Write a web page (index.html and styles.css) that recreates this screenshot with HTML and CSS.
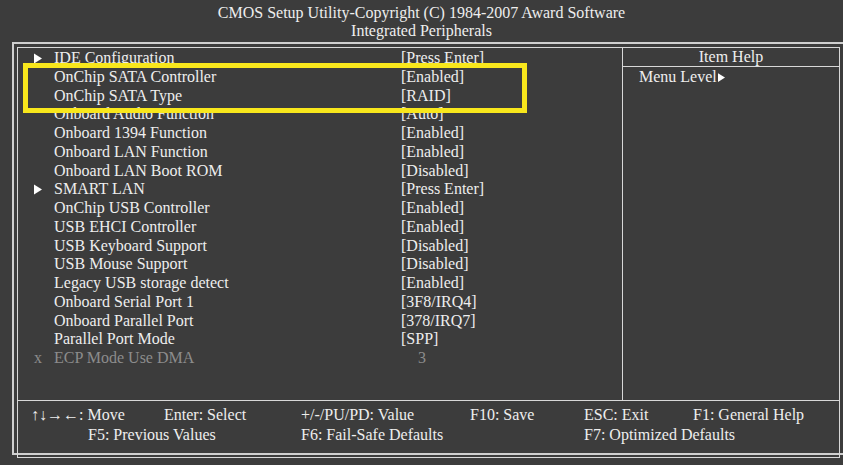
FILE: index.html
```html
<!DOCTYPE html>
<html lang="en">
<head>
    <meta charset="UTF-8">
    <meta name="viewport" content="width=device-width, initial-scale=1.0">
    <title>Integrated Peripherals</title>
    <link rel="stylesheet" href="styles.css">
</head>
<body>
    <div class="title">
        <div>CMOS Setup Utility-Copyright (C) 1984-2007 Award Software</div>
        <div>Integrated Peripherals</div>
    </div>

    <div class="frame">
        <div class="inner">
            <div class="menu">
                <div class="row"><span class="mark"><svg class="tri" viewBox="0 0 8 10"><polygon points="0,0 8,5 0,10"/></svg></span><span class="name">IDE Configuration</span><span class="value">[Press Enter]</span></div>
                <div class="row"><span class="mark"></span><span class="name">OnChip SATA Controller</span><span class="value">[Enabled]</span></div>
                <div class="row"><span class="mark"></span><span class="name">OnChip SATA Type</span><span class="value">[RAID]</span></div>
                <div class="row"><span class="mark"></span><span class="name">Onboard Audio Function</span><span class="value">[Auto]</span></div>
                <div class="row"><span class="mark"></span><span class="name">Onboard 1394 Function</span><span class="value">[Enabled]</span></div>
                <div class="row"><span class="mark"></span><span class="name">Onboard LAN Function</span><span class="value">[Enabled]</span></div>
                <div class="row"><span class="mark"></span><span class="name">Onboard LAN Boot ROM</span><span class="value">[Disabled]</span></div>
                <div class="row"><span class="mark"><svg class="tri" viewBox="0 0 8 10"><polygon points="0,0 8,5 0,10"/></svg></span><span class="name">SMART LAN</span><span class="value">[Press Enter]</span></div>
                <div class="row"><span class="mark"></span><span class="name">OnChip USB Controller</span><span class="value">[Enabled]</span></div>
                <div class="row"><span class="mark"></span><span class="name">USB EHCI Controller</span><span class="value">[Enabled]</span></div>
                <div class="row"><span class="mark"></span><span class="name">USB Keyboard Support</span><span class="value">[Disabled]</span></div>
                <div class="row"><span class="mark"></span><span class="name">USB Mouse Support</span><span class="value">[Disabled]</span></div>
                <div class="row"><span class="mark"></span><span class="name">Legacy USB storage detect</span><span class="value">[Enabled]</span></div>
                <div class="row"><span class="mark"></span><span class="name">Onboard Serial Port 1</span><span class="value">[3F8/IRQ4]</span></div>
                <div class="row"><span class="mark"></span><span class="name">Onboard Parallel Port</span><span class="value">[378/IRQ7]</span></div>
                <div class="row"><span class="mark"></span><span class="name">Parallel Port Mode</span><span class="value">[SPP]</span></div>
                <div class="row dim"><span class="mark">x</span><span class="name">ECP Mode Use DMA</span><span class="value plain">3</span></div>

                <div class="highlight"></div>
            </div>

            <div class="help">
                <div class="help-head">Item Help</div>
                <div class="help-text">Menu Level<svg class="tri small" viewBox="0 0 8 10"><polygon points="0,0 8,5 0,10"/></svg></div>
            </div>

            <div class="keys">
                <span>&uarr;&darr;&rarr;&larr;: Move</span>
                <span>Enter: Select</span>
                <span>+/-/PU/PD: Value</span>
                <span>F10: Save</span>
                <span>ESC: Exit</span>
                <span>F1: General Help</span>

                <span class="prev">F5: Previous Values</span>
                <span>F6: Fail-Safe Defaults</span>
                <span class="opt">F7: Optimized Defaults</span>
            </div>
        </div>
    </div>
</body>
</html>
```

FILE: styles.css
```css
body {
    margin: 0;
    background-color: #3c3c3c;
    color: #eeeeee;
    font-family: "Liberation Serif", "Times New Roman", serif;
    font-size: 16px;
    width: 843px;
    height: 465px;
    overflow: hidden;
}

.title {
    text-align: center;
    line-height: 18px;
    padding-top: 4px;
    height: 38px;
}

/* double line frame */
.frame {
    margin-left: 12px;
    width: 833px;
    height: 413px;
    border: 2px solid #cfcfcf;
    border-right: none;
    padding: 3px 0 3px 3px;
    box-sizing: border-box;
}

.inner {
    width: 823px;
    height: 411px;
    border: 1.5px solid #d8d8d8;
    box-sizing: border-box;
    display: grid;
    grid-template-columns: 604px 1fr;
    grid-template-rows: 352px 1fr;
}

.menu {
    position: relative;
    padding-top: 1px;
}

.row {
    display: flex;
    height: 18.75px;
    line-height: 18.75px;
    white-space: nowrap;
}

.mark {
    width: 36px;
    padding-left: 16px;
    box-sizing: border-box;
    display: flex;
    align-items: center;
}

.name {
    width: 347px;
}

.dim {
    color: #8c8c8c;
}

.value.plain {
    padding-left: 17px;
}

.tri {
    width: 8px;
    height: 11px;
    fill: #ffffff;
}

.tri.small {
    width: 7px;
    height: 11px;
    margin-left: 1px;
}

.highlight {
    position: absolute;
    left: 5px;
    top: 15px;
    width: 504px;
    height: 50px;
    border: 5px solid #f8e71c;
    box-sizing: border-box;
}

.help {
    border-left: 1.5px solid #d8d8d8;
}

.help-head {
    text-align: center;
    line-height: 18px;
    border-bottom: 1.5px solid #d8d8d8;
}

.help-text {
    padding-left: 16px;
    line-height: 20px;
    display: flex;
    align-items: center;
}

.keys {
    grid-column: 1 / 3;
    border-top: 1.5px solid #d8d8d8;
    padding: 4px 0 0 13px;
    display: grid;
    grid-template-columns: 133px 137px 169px 114px 109px 1fr;
    grid-auto-rows: 20px;
    line-height: 20px;
    white-space: nowrap;
}

.prev {
    grid-column: 1 / 3;
    padding-left: 57px;
}

.opt {
    grid-column: 5 / 7;
}

.keys .opt {
    grid-column-start: 5;
}

.keys span:nth-child(8) {
    grid-column: 3 / 5;
}
```
